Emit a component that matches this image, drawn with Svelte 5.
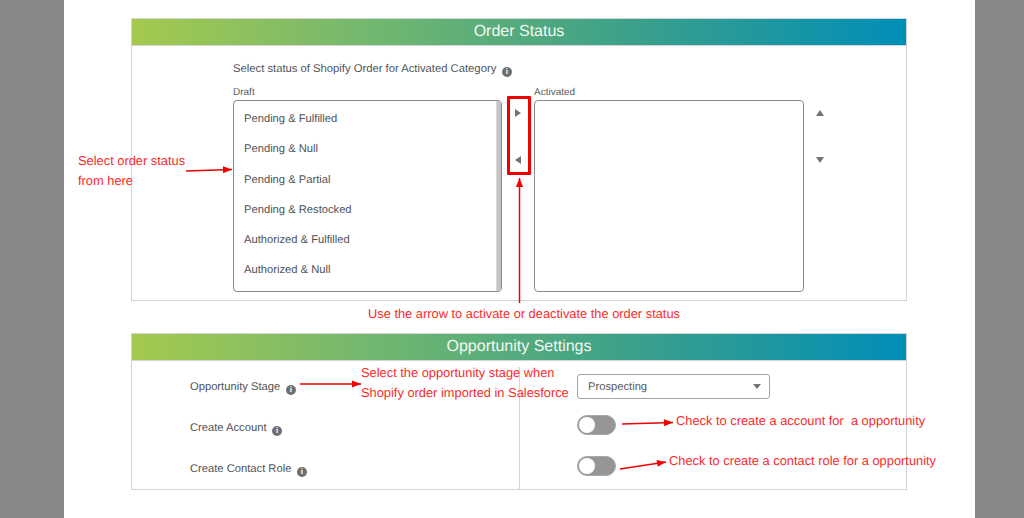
<script>
  const draft = [
    'Pending & Fulfilled',
    'Pending & Null',
    'Pending & Partial',
    'Pending & Restocked',
    'Authorized & Fulfilled',
    'Authorized & Null'
  ]
  const settings = ['Opportunity Stage', 'Create Account', 'Create Contact Role']

  // annotation arrows, in page coordinates: [x1, y1, x2, y2]
  const arrows = [
    [186, 171, 232, 169.5],
    [519.5, 303, 519.5, 178],
    [300, 384, 361, 384],
    [622, 424, 673, 422.5],
    [620, 469, 666, 462]
  ]
  const head = (a) => {
    const angle = Math.atan2(a[3] - a[1], a[2] - a[0]) * 180 / Math.PI
    return `translate(${a[2]} ${a[3]}) rotate(${angle})`
  }
</script>

<div class="page">
  <section class="panel">
    <h2>Order Status</h2>
    <div class="status-body">
      <p class="intro">Select status of Shopify Order for Activated Category <span class="info">i</span></p>
      <div class="picker">
        <div class="col">
          <span class="cap">Draft</span>
          <div class="listbox draft">
            <ul>
              {#each draft as item}
                <li>{item}</li>
              {/each}
            </ul>
            <div class="scroll"></div>
          </div>
        </div>
        <div class="moves">
          <span class="tri right"></span>
          <span class="tri left"></span>
        </div>
        <div class="col">
          <span class="cap">Activated</span>
          <div class="listbox active"></div>
        </div>
        <div class="order">
          <span class="tri up"></span>
          <span class="tri down"></span>
        </div>
      </div>
    </div>
  </section>

  <section class="panel second">
    <h2>Opportunity Settings</h2>
    <div class="settings">
      <div class="labels">
        {#each settings as label}
          <div class="label">{label} <span class="info">i</span></div>
        {/each}
      </div>
      <div class="controls">
        <div class="select">Prospecting <span class="tri down small"></span></div>
        <div class="toggle"><span></span></div>
        <div class="toggle"><span></span></div>
      </div>
    </div>
  </section>

  <div class="highlight"></div>
  <p class="note n1">Select order status<br />from here</p>
  <p class="note n2">Use the arrow to activate or deactivate the order status</p>
  <p class="note n3">Select the opportunity stage when<br />Shopify order imported in Salesforce</p>
  <p class="note n4">Check to create a account for&nbsp; a opportunity</p>
  <p class="note n5">Check to create a contact role for a opportunity</p>

  <svg class="arrows" width="1024" height="518" viewBox="0 0 1024 518" aria-hidden="true">
    {#each arrows as a}
      <line x1={a[0]} y1={a[1]} x2={a[2]} y2={a[3]} stroke="#f00000" stroke-width="1.5" />
      <path d="M0 0 L-9 -3.5 L-9 3.5 Z" fill="#f00000" transform={head(a)} />
    {/each}
  </svg>
</div>

<style>
  :global(body) {
    margin: 0;
    background: #888888;
  }
  .page {
    position: relative;
    box-sizing: border-box;
    width: 911px;
    height: 518px;
    margin-left: 64px;
    padding: 18px 0 0 67px;
    background: #ffffff;
    font-family: "Liberation Sans", Arial, sans-serif;
    color: #4f5358;
    text-rendering: geometricPrecision;
    overflow: visible;
  }
  .panel {
    box-sizing: border-box;
    width: 776px;
    height: 283px;
    border: 1px solid #d4d4d4;
  }
  .second {
    height: 157px;
    margin-top: 32px;
  }
  h2 {
    margin: 0;
    height: 26px;
    line-height: 26px;
    text-align: center;
    font-size: 16px;
    font-weight: 400;
    color: #f4f8f0;
    background: linear-gradient(90deg, #a5c94f 0%, #74b86e 30%, #3ba08a 65%, #008eb8 100%);
    border-bottom: 1px solid #d4d4d4;
  }
  .second h2 {
    line-height: 25px;
  }
  .status-body {
    padding: 16px 0 0 101px;
  }
  .intro {
    margin: 0 0 9px;
    height: 15px;
    line-height: 15px;
    font-size: 11.25px;
  }
  .info {
    display: inline-block;
    width: 10px;
    height: 10px;
    margin-left: 2.5px;
    border-radius: 50%;
    background: #6f6f6f;
    color: #ffffff;
    font-size: 8px;
    font-weight: 700;
    line-height: 10px;
    text-align: center;
    vertical-align: -2px;
  }
  .picker {
    display: flex;
  }
  .col {
    display: flex;
    flex-direction: column;
  }
  .cap {
    height: 14px;
    line-height: 13px;
    font-size: 10px;
    color: #5a5a5a;
  }
  .listbox {
    box-sizing: border-box;
    height: 192px;
    border: 1px solid #8a8a8a;
    border-radius: 4px;
    background: #ffffff;
  }
  .draft {
    display: flex;
    justify-content: space-between;
    width: 269px;
  }
  .active {
    width: 270px;
  }
  ul {
    margin: 0;
    padding: 3px 0 0 10px;
    list-style: none;
    font-size: 11.2px;
  }
  li {
    height: 30.3px;
    line-height: 30px;
  }
  .scroll {
    width: 4px;
    background: #c4c4c4;
    border-left: 1px solid #dcdcdc;
  }
  .moves {
    box-sizing: border-box;
    width: 32px;
    height: 74px;
    margin-top: 7px;
    padding-top: 16px;
    display: flex;
    flex-direction: column;
    align-items: center;
    gap: 39px;
  }
  .order {
    display: flex;
    flex-direction: column;
    align-items: center;
    gap: 41px;
    width: 32px;
    margin-top: 24px;
  }
  .tri {
    display: block;
    width: 0;
    height: 0;
    border-style: solid;
    border-color: transparent;
  }
  .right {
    border-width: 4.5px 0 4.5px 6px;
    border-left-color: #737373;
  }
  .left {
    border-width: 4.5px 6px 4.5px 0;
    border-right-color: #737373;
  }
  .up {
    border-width: 0 4.5px 6px;
    border-bottom-color: #737373;
  }
  .down {
    border-width: 6px 4.5px 0;
    border-top-color: #737373;
  }
  .settings {
    display: grid;
    grid-template-columns: 387px 1fr;
    height: 129px;
  }
  .labels {
    display: flex;
    flex-direction: column;
    padding: 19px 0 0 58px;
    gap: 26px;
  }
  .label {
    height: 15px;
    line-height: 15px;
    font-size: 11.2px;
  }
  .controls {
    margin-top: 6px;
    padding: 7px 0 0 57px;
    border-left: 1px solid #d4d4d4;
  }
  .select {
    box-sizing: border-box;
    display: flex;
    align-items: center;
    justify-content: space-between;
    width: 193px;
    height: 25px;
    padding: 0 8px 0 10px;
    border: 1px solid #a4a4a4;
    border-radius: 3px;
    font-size: 11.2px;
    color: #5a5a5a;
  }
  .small {
    border-width: 5px 4.5px 0;
  }
  .toggle {
    box-sizing: border-box;
    display: flex;
    align-items: center;
    width: 39px;
    height: 20px;
    margin-top: 16px;
    padding: 0 1px;
    border-radius: 10px;
    background: #969696;
    border: 1px solid #a8a8a8;
  }
  .toggle + .toggle {
    margin-top: 21px;
  }
  .toggle span {
    display: block;
    width: 16px;
    height: 16px;
    border-radius: 50%;
    background: #ffffff;
  }
  .highlight {
    position: absolute;
    left: 443px;
    top: 96px;
    width: 24px;
    height: 79px;
    box-sizing: border-box;
    border: 3px solid #f00000;
    border-radius: 1px;
  }
  .note {
    position: absolute;
    margin: 0;
    font-size: 12.85px;
    line-height: 20px;
    color: #fa2a2a;
    white-space: nowrap;
  }
  .n1 { left: 14px; top: 151px; }
  .n2 { left: 304px; top: 304px; }
  .n3 { left: 297px; top: 363px; }
  .n4 { left: 612px; top: 411px; }
  .n5 { left: 605px; top: 451px; }
  .arrows {
    position: absolute;
    left: -64px;
    top: 0;
    pointer-events: none;
  }
</style>
